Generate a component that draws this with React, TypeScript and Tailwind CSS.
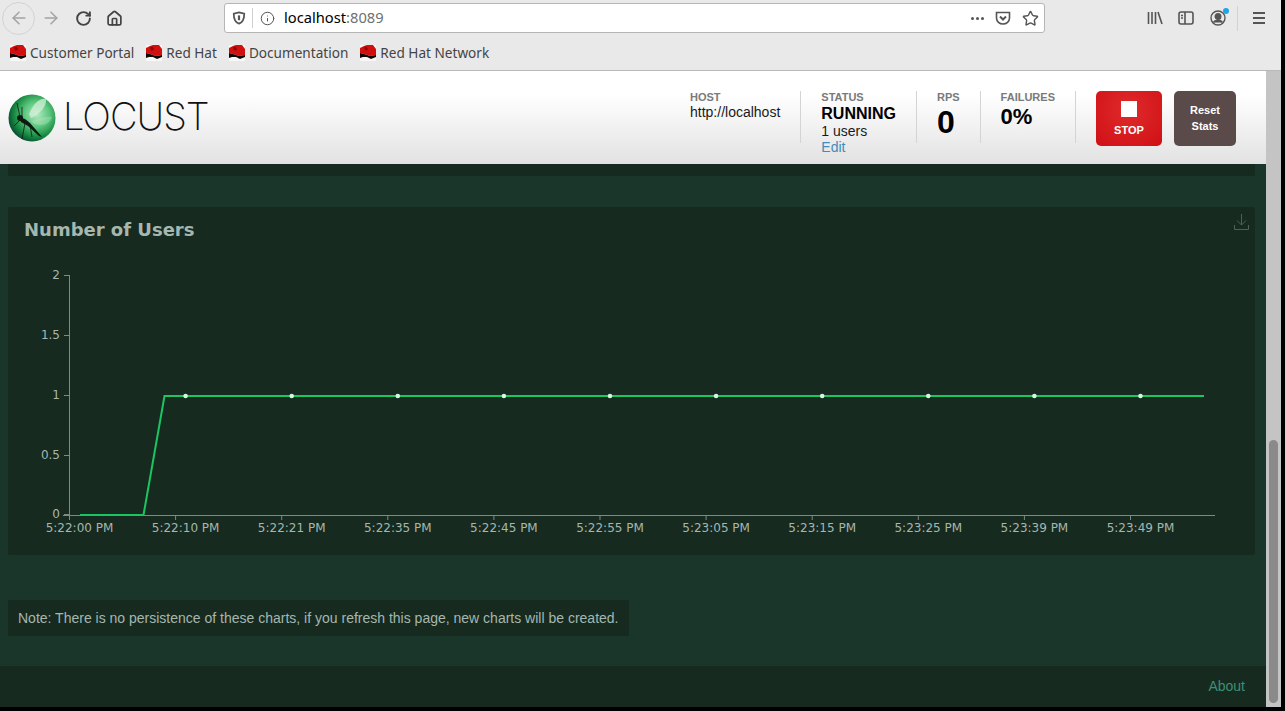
import { ArrowLeft, ArrowRight, House, Info, RotateCw, Star } from 'lucide-react';

const bookmarks = ['Customer Portal', 'Red Hat', 'Documentation', 'Red Hat Network'];
const timeLabels = [
  '5:22:00 PM',
  '5:22:10 PM',
  '5:22:21 PM',
  '5:22:35 PM',
  '5:22:45 PM',
  '5:22:55 PM',
  '5:23:05 PM',
  '5:23:15 PM',
  '5:23:25 PM',
  '5:23:39 PM',
  '5:23:49 PM',
];
const yLabels = [
  { label: '2', y: 275 },
  { label: '1.5', y: 335 },
  { label: '1', y: 395 },
  { label: '0.5', y: 455 },
  { label: '0', y: 514 },
];

function RedHatIcon() {
  return (
    <svg width="16" height="16" viewBox="0 0 16 16" className="shrink-0">
      <rect x="0" y="0" width="16" height="16" fill="#f7f7f7" />
      <path d="M0 3 L4 1 L7 0 L13 0 L16 4 L16 10 L10 11 L4 9 L0 8 Z" fill="#d20f0f" />
      <path d="M4 2 L7 1.5 L8 5 L5 5.5 Z" fill="#8f0808" />
      <path d="M0 8 L4 9 L10 11 L16 10 L16 12 L11 14 L7 12 L3 12 L0 13 Z" fill="#120505" />
    </svg>
  );
}

function LocustLogo() {
  return (
    <svg width="48" height="48" viewBox="0 0 48 48" className="shrink-0">
      <defs>
        <radialGradient id="orb" cx="60%" cy="42%" r="62%">
          <stop offset="0%" stopColor="#b5ebc4" />
          <stop offset="45%" stopColor="#58c47a" />
          <stop offset="80%" stopColor="#14853f" />
          <stop offset="100%" stopColor="#0a4d35" />
        </radialGradient>
      </defs>
      <circle cx="24" cy="24" r="23.5" fill="url(#orb)" />
      <path d="M21 20 C25 10 32 3 38 5 C39 12 32 20 23 24 Z" fill="#d3f0d8" opacity="0.75" />
      <path d="M24 27 C32 24 40 22 44 23 C42 31 32 33 25 29 Z" fill="#c4ecca" opacity="0.35" />
      <path d="M11 23 L17 25 L22 29 L34 43 L31 42 L20 32 L13 28 Z" fill="#0c1a12" />
      <circle cx="12" cy="24" r="3" fill="#0c1a12" />
      <path d="M12 23 L9 9 M14 24 L14 13 M17 29 L14 45 M22 31 L24 43 M11 27 L6 32" stroke="#0c1a12" strokeWidth="0.8" fill="none" />
    </svg>
  );
}

function BrowserBar() {
  return (
    <div className="h-[71px] shrink-0 bg-[#e9e9e9] border-b border-[#b8b8b8] text-[#444] font-['Noto_Sans',sans-serif]">
      <div className="h-[36px] flex items-center">
        <div className="ml-[2px] w-[33px] h-[33px] rounded-full border border-[#d2d2d2] flex items-center justify-center text-[#a3a3a3]">
          <ArrowLeft size={20} strokeWidth={1.8} />
        </div>
        <ArrowRight size={20} strokeWidth={1.8} className="ml-[6px] text-[#a3a3a3]" />
        <RotateCw size={17} strokeWidth={2.7} className="ml-[14px] text-[#444]" />
        <House size={17} strokeWidth={2.4} className="ml-[14px] text-[#444]" />
        <div className="ml-[101px] w-[821px] h-[30px] bg-white rounded-[3px] border border-[#b5b5b5] flex items-center">
          <svg width="14" height="14" viewBox="0 0 16 16" className="ml-[7px]" fill="none" stroke="#555" strokeWidth="2">
            <path d="M8 1.5 L14 3 C14 9 12 13 8 14.5 C4 13 2 9 2 3 Z" />
            <path d="M8 5 V10.5" strokeWidth="2.5" />
          </svg>
          <div className="ml-[6px] w-px h-[20px] bg-[#cfcfcf]" />
          <Info size={15} strokeWidth={1.6} className="ml-[7px] text-[#555]" />
          <span className="ml-[9px] -mt-[2px] text-[14.7px] text-black">
            localhost<span className="text-[#6f6f6f]">:8089</span>
          </span>
          <div className="ml-auto flex items-center">
            <div className="flex gap-[2px]">
              <span className="w-[3px] h-[3px] rounded-full bg-[#555]" />
              <span className="w-[3px] h-[3px] rounded-full bg-[#555]" />
              <span className="w-[3px] h-[3px] rounded-full bg-[#555]" />
            </div>
            <svg width="16" height="16" viewBox="0 0 16 16" className="ml-[11px]" fill="none" stroke="#555" strokeWidth="1.6">
              <path d="M1.5 2.5 H14.5 V8 C14.5 11.5 11.5 14 8 14 C4.5 14 1.5 11.5 1.5 8 Z" />
              <path d="M5 6.5 L8 9.5 L11 6.5" strokeWidth="2" />
            </svg>
            <Star size={17} strokeWidth={2} className="ml-[11px] mr-[5px] text-[#555]" />
          </div>
        </div>
        <div className="ml-[102px] flex items-center">
          <svg width="16" height="16" viewBox="0 0 16 16" fill="none" stroke="#555" strokeWidth="1.6">
            <path d="M1.5 2 V14 M5 2 V14 M8.5 2 V14 M11 2 L15 14" />
          </svg>
          <svg width="16" height="16" viewBox="0 0 16 16" className="ml-[15px]" fill="none" stroke="#555" strokeWidth="1.6">
            <rect x="1" y="2" width="14" height="12" rx="2" />
            <path d="M7 2 V14 M3 5.5 H5 M3 8 H5" />
          </svg>
          <div className="relative ml-[16px]">
            <svg width="16" height="16" viewBox="0 0 16 16" fill="none" stroke="#555" strokeWidth="1.4">
              <circle cx="8" cy="8" r="7" />
              <circle cx="8" cy="6.5" r="2.8" fill="#555" />
              <path d="M3.5 12.5 C5 9.5 11 9.5 12.5 12.5" fill="#555" />
            </svg>
            <span className="absolute -top-[2px] -right-[3px] w-[6px] h-[6px] rounded-full bg-[#1ea5e6]" />
          </div>
          <div className="ml-[11px] w-px h-[25px] bg-[#d2d2d2]" />
          <div className="ml-[15px] w-[12px] flex flex-col gap-[3px]">
            <span className="h-[2px] bg-[#555]" />
            <span className="h-[2px] bg-[#555]" />
            <span className="h-[2px] bg-[#555]" />
          </div>
        </div>
      </div>
      <div className="h-[34px] pt-px pl-[10px] flex items-center gap-[12px] text-[13.6px]">
        {bookmarks.map((name) => (
          <div key={name} className="flex items-center gap-[4px]">
            <RedHatIcon />
            <span>{name}</span>
          </div>
        ))}
      </div>
    </div>
  );
}

function Stat({ label, children }: { label: string; children: React.ReactNode }) {
  return (
    <div className="h-[52px] pl-5 pr-5 border-r border-[#d4d4d4]">
      <div className="text-[11px] leading-[12px] font-bold text-[#7a7a7a]">{label}</div>
      {children}
    </div>
  );
}

function Header() {
  return (
    <div className="h-[93px] shrink-0 bg-gradient-to-b from-white from-25% to-[#e2e2e2] flex items-center pl-2 pr-[30px] font-['Liberation_Sans',sans-serif]">
      <LocustLogo />
      <span className="ml-[7px] -mt-[3px] font-['Inter',sans-serif] font-extralight text-[38px] leading-none tracking-[-1px] text-[#111]">LOCUST</span>
      <div className="ml-auto mt-px flex items-start h-[55px]">
        <Stat label="HOST">
          <div className="text-[14px] leading-[16px] text-[#1a1a1a] mt-[1px]">http://localhost</div>
        </Stat>
        <Stat label="STATUS">
          <div className="text-[16px] leading-[18px] font-bold text-black mt-[2px]">RUNNING</div>
          <div className="text-[14px] leading-[16px] text-[#1a1a1a]">1 users</div>
          <div className="text-[14px] leading-[16px] text-[#428bba]">Edit</div>
        </Stat>
        <Stat label="RPS">
          <div className="text-[32px] leading-[36px] font-bold text-black mt-px">0</div>
        </Stat>
        <Stat label="FAILURES">
          <div className="text-[22px] leading-[26px] font-bold text-black mt-px">0%</div>
        </Stat>
        <div className="ml-5 w-[66px] h-[55px] rounded-[5px] bg-[radial-gradient(circle_at_50%_35%,#e02a2a,#cf1016)] flex flex-col items-center text-white">
          <span className="mt-[10px] w-[16px] h-[16px] bg-white" />
          <span className="mt-[7px] text-[11px] leading-[13px] font-bold">STOP</span>
        </div>
        <div className="ml-3 w-[62px] h-[55px] rounded-[5px] bg-[#5a4a4a] flex flex-col items-center justify-center text-white text-[11px] leading-[16px] font-bold">
          <span>Reset</span>
          <span>Stats</span>
        </div>
      </div>
    </div>
  );
}

function UsersChart() {
  const font = "'DejaVu Sans', sans-serif";
  return (
    <svg width="1247" height="348" viewBox="8 207 1247 348" className="block">
      <line x1="69.5" y1="275" x2="69.5" y2="515.5" stroke="#7c8c84" />
      <line x1="63" y1="515.5" x2="1215" y2="515.5" stroke="#7c8c84" />
      {yLabels.map((t) => (
        <g key={t.label}>
          <line x1="64" y1={t.y + 0.5} x2="69" y2={t.y + 0.5} stroke="#7c8c84" />
          <text x="60" y={t.y + 4} textAnchor="end" fill="#a5b7ae" fontSize="12" fontFamily={font}>
            {t.label}
          </text>
        </g>
      ))}
      {timeLabels.map((label, i) => (
        <g key={label}>
          <line x1={69.5 + 106.1 * i} y1="515" x2={69.5 + 106.1 * i} y2="520" stroke="#7c8c84" />
          <text x={79.5 + 106.1 * i} y="531.5" textAnchor="middle" fill="#a5b7ae" fontSize="12" fontFamily={font}>
            {label}
          </text>
        </g>
      ))}
      <polyline points="80,515 143.5,515 164.5,396 1204,396" fill="none" stroke="#1ac562" strokeWidth="2" />
      {timeLabels.slice(1).map((label, i) => (
        <circle key={label} cx={185.6 + 106.1 * i} cy="396" r="2.3" fill="#d4f7df" />
      ))}
    </svg>
  );
}

function Content() {
  return (
    <div className="flex-1 min-h-0 flex flex-col bg-[#1a352a] font-['Liberation_Sans',sans-serif]">
      <div className="flex-1 pl-2 pr-[11px]">
        <div className="h-[12px] bg-[#162a20] rounded-b-[2px]" />
        <div className="relative mt-[31px] h-[348px] bg-[#162a20] rounded-[2px] overflow-hidden">
          <div className="absolute left-4 top-[9px] text-[18px] font-bold text-[#a5b7ae] font-['DejaVu_Sans',sans-serif]">Number of Users</div>
          <svg width="15" height="16" viewBox="0 0 15 16" className="absolute right-[6px] top-[7px]" fill="none" stroke="#4f6158">
            <path d="M7.5 0 V11 M3 6.5 L7.5 11 L12 6.5 M0.5 11 V15.5 H14.5 V11" />
          </svg>
          <UsersChart />
        </div>
        <div className="mt-[45px] inline-block h-[36px] px-[10px] bg-[#162a20] text-[14px] leading-[36px] text-[#a5b7ae]">
          Note: There is no persistence of these charts, if you refresh this page, new charts will be created.
        </div>
      </div>
      <div className="h-[41px] shrink-0 bg-[#162a20] flex items-center justify-end pr-[21px] text-[14px] text-[#3d8f73]">About</div>
    </div>
  );
}

function Scrollbar() {
  return (
    <div className="w-[15px] shrink-0 bg-[#c4c4c4] pt-[369px] pb-[4px] px-[3px]">
      <div className="h-full rounded-full bg-[#8a8a8a]" />
    </div>
  );
}

export default function App() {
  return (
    <div className="w-[1285px] h-[711px] bg-black overflow-hidden">
      <div className="w-[1281px] h-[707px] flex flex-col">
        <BrowserBar />
        <div className="flex-1 min-h-0 flex">
          <div className="flex-1 min-w-0 flex flex-col">
            <Header />
            <Content />
          </div>
          <Scrollbar />
        </div>
      </div>
    </div>
  );
}
